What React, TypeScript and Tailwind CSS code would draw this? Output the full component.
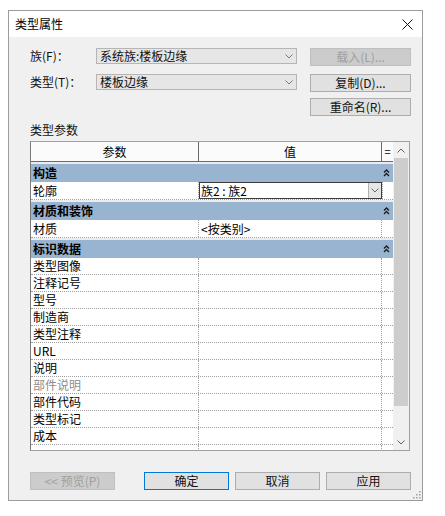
import React from "react";

const FONT = { fontFamily: '"Noto Sans CJK SC", "Microsoft YaHei", sans-serif' };

function Chevron({ up = false, color = "#606060" }: { up?: boolean; color?: string }) {
  return (
    <svg width="8" height="5" viewBox="0 0 8 5" className="block">
      <path
        d={up ? "M0.5 4.5 L4 1 L7.5 4.5" : "M0.5 0.5 L4 4 L7.5 0.5"}
        fill="none"
        stroke={color}
        strokeWidth="1"
      />
    </svg>
  );
}

function Collapse() {
  return (
    <svg width="7" height="8" viewBox="0 0 7 8" className="block">
      <path d="M1 3.5 L3.5 1 L6 3.5 M1 7 L3.5 4.5 L6 7" fill="none" stroke="#1a1a1a" strokeWidth="1.3" />
    </svg>
  );
}

function Combo({ text }: { text: string }) {
  return (
    <div className="w-[201px] h-[16px] border border-[#b5b5b5] bg-[#e6e6e6] flex items-center pl-[3px] pr-[3px] text-[12px] leading-none text-[#111]">
      <span className="flex-1">{text}</span>
      <Chevron color="#7a7a7a" />
    </div>
  );
}

function Btn({
  text,
  disabled = false,
  primary = false,
  w = "w-[101px]",
}: {
  text: string;
  disabled?: boolean;
  primary?: boolean;
  w?: string;
}) {
  const cls = disabled
    ? "bg-[#cccccc] border-[#bfbfbf] text-[#a0a0a0]"
    : primary
    ? "bg-[#e1e1e1] border-[#0078d7] text-[#111]"
    : "bg-[#e1e1e1] border-[#adadad] text-[#111]";
  return (
    <div className={`${w} h-[18px] border ${cls} flex items-center justify-center text-[12px] leading-none`}>
      {text}
    </div>
  );
}

function GroupRow({ title }: { title: string }) {
  return (
    <div className="h-[20px] shrink-0 border-t-2 border-[#ececec] bg-[#99b4d1] flex items-center">
      <span className="flex-1 pl-[2px] font-bold text-[12px] leading-none text-black">{title}</span>
      <div className="w-[11px] flex justify-center pr-[3px]">
        <Collapse />
      </div>
    </div>
  );
}

function DataRow({ name, value, h = "h-[17px]", gray = false }: { name: string; value?: React.ReactNode; h?: string; gray?: boolean }) {
  return (
    <div className={`${h} shrink-0 flex border-b border-dotted border-[#a0a0a0] bg-white`}>
      <div className={`w-[168px] border-r border-dotted border-[#a0a0a0] pl-[2px] flex items-center text-[12px] leading-none ${gray ? "text-[#8c8c8c]" : "text-black"}`}>
        {name}
      </div>
      <div className="w-[183px] border-r border-dotted border-[#a0a0a0] flex items-center text-[12px] leading-none text-black">
        {value}
      </div>
      <div className="w-[11px]"></div>
    </div>
  );
}

export default function App() {
  const rows = [
    "类型图像",
    "注释记号",
    "型号",
    "制造商",
    "类型注释",
    "URL",
    "说明",
    "部件说明",
    "部件代码",
    "类型标记",
    "成本",
    "",
  ];
  return (
    <div className="w-[445px] h-[516px] bg-white pl-[8px] pt-[10px]" style={FONT}>
      <div className="w-[415px] h-[491px] border border-[#9c9c9c] bg-[#f0f0f0] flex flex-col relative">
        {/* title bar */}
        <div className="h-[26px] shrink-0 bg-white flex items-center pl-[6px] pr-[9px]">
          <span className="flex-1 text-[12px] leading-none text-black">类型属性</span>
          <svg width="11" height="11" viewBox="0 0 11 11" className="block">
            <path d="M0.5 0.5 L10.5 10.5 M10.5 0.5 L0.5 10.5" stroke="#111" strokeWidth="1" />
          </svg>
        </div>

        <div className="flex flex-col pl-[21px] pt-[11px]">
          {/* row 1 */}
          <div className="flex items-start h-[18px]">
            <div className="w-[66px] h-[16px] flex items-center text-[12px] leading-none text-[#111]">族(F)：</div>
            <Combo text="系统族:楼板边缘" />
            <div className="w-[13px]" />
            <Btn text="载入(L)..." disabled />
          </div>
          {/* row 2 */}
          <div className="flex items-start h-[18px] mt-[8px]">
            <div className="w-[66px] h-[16px] flex items-center text-[12px] leading-none text-[#111]">类型(T)：</div>
            <Combo text="楼板边缘" />
            <div className="w-[13px]" />
            <Btn text="复制(D)..." />
          </div>
          {/* row 3 */}
          <div className="flex items-start h-[18px] mt-[6px]">
            <div className="w-[280px]" />
            <Btn text="重命名(R)..." />
          </div>
          <div className="mt-[6px] h-[16px] flex items-center text-[12px] leading-none text-[#111]">类型参数</div>

          {/* table */}
          <div className="mt-[3px] w-[380px] h-[310px] shrink-0 border border-[#a0a0a0] border-l-[#7a7a7a] flex bg-white overflow-hidden">
            <div className="w-[362px] flex flex-col overflow-hidden">
              <div className="h-[20px] flex border-b border-[#6a6a6a] bg-[#fbfbfb] shrink-0">
                <div className="w-[168px] border-r border-[#6a6a6a] flex items-center justify-center text-[12px] leading-none text-black">参数</div>
                <div className="w-[183px] border-r border-[#6a6a6a] flex items-center justify-center text-[12px] leading-none text-black">值</div>
                <div className="w-[11px] flex items-center justify-center text-[11px] leading-none text-black">=</div>
              </div>
              <GroupRow title="构造" />
              <div className="h-[18px] flex border-b border-dotted border-[#a0a0a0] bg-white shrink-0">
                <div className="w-[168px] border-r border-dotted border-[#a0a0a0] pl-[2px] flex items-center text-[12px] leading-none text-black">轮廓</div>
                <div className="w-[183px] border border-[#3c3c3c] flex items-center bg-white">
                  <span className="flex-1 pl-[1px] text-[12px] leading-none text-black">族2 : 族2</span>
                  <div className="w-[13px] h-full bg-[#e6e6e6] border-l border-[#b0b0b0] flex items-center justify-center">
                    <Chevron color="#6a6a6a" />
                  </div>
                </div>
                <div className="w-[11px] border-l border-dotted border-[#a0a0a0]"></div>
              </div>
              <GroupRow title="材质和装饰" />
              <DataRow name="材质" h="h-[18px]" value={<span className="pl-[2px]">&lt;按类别&gt;</span>} />
              <GroupRow title="标识数据" />
              {rows.map((r, i) => (
                <DataRow key={i} name={r} gray={r === "部件说明"} />
              ))}
            </div>
            {/* scrollbar */}
            <div className="w-[16px] bg-[#f0f0f0] flex flex-col">
              <div className="h-[16px] shrink-0 flex items-center justify-center">
                <Chevron up color="#606060" />
              </div>
              <div className="h-[248px] shrink-0 mx-[1px] bg-[#cdcdcd]" />
              <div className="flex-1" />
              <div className="h-[16px] shrink-0 flex items-center justify-center">
                <Chevron color="#606060" />
              </div>
            </div>
          </div>

          {/* bottom buttons */}
          <div className="flex mt-[21px]">
            <Btn text="<< 预览(P)" disabled w="w-[85px]" />
            <div className="w-[29px]" />
            <Btn text="确定" primary w="w-[85px]" />
            <div className="w-[6px]" />
            <Btn text="取消" w="w-[85px]" />
            <div className="w-[6px]" />
            <Btn text="应用" w="w-[85px]" />
          </div>
        </div>

        {/* resize grip */}
        <svg width="8" height="8" viewBox="0 0 8 8" className="absolute right-[1px] bottom-[1px]">
          <rect x="6" y="0" width="1.5" height="1.5" fill="#a0a0a0" />
          <rect x="3" y="3" width="1.5" height="1.5" fill="#a0a0a0" />
          <rect x="6" y="3" width="1.5" height="1.5" fill="#a0a0a0" />
          <rect x="0" y="6" width="1.5" height="1.5" fill="#a0a0a0" />
          <rect x="3" y="6" width="1.5" height="1.5" fill="#a0a0a0" />
          <rect x="6" y="6" width="1.5" height="1.5" fill="#a0a0a0" />
        </svg>
      </div>
    </div>
  );
}
